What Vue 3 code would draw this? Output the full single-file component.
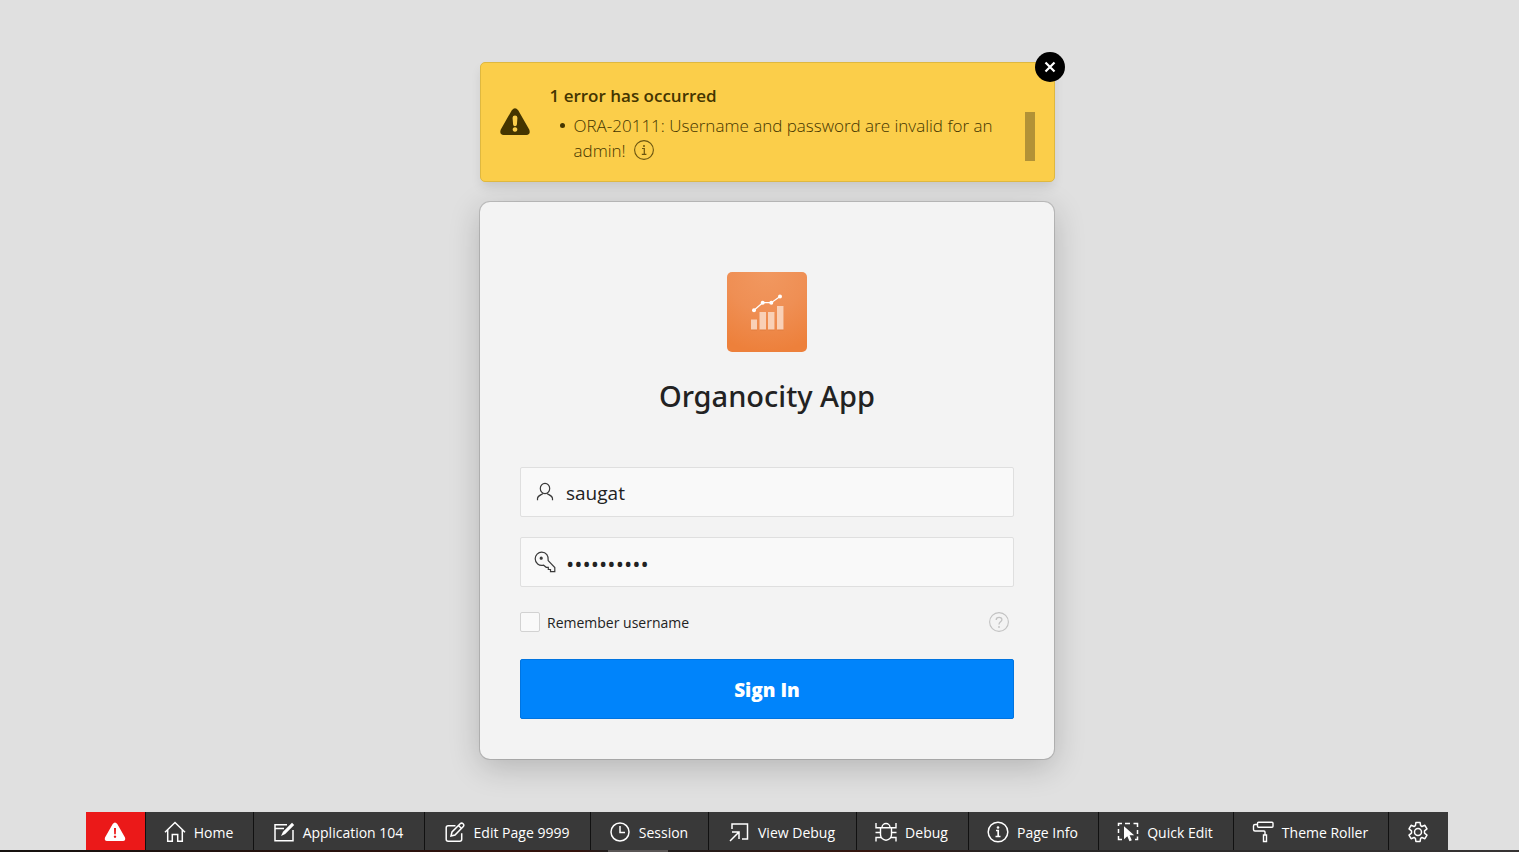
<script setup>
import { ref } from 'vue'

const username = ref('saugat')
const password = ref('organocity')
const remember = ref(false)

const tools = [
  { id: 'home', label: 'Home' },
  { id: 'application', label: 'Application 104' },
  { id: 'edit', label: 'Edit Page 9999' },
  { id: 'session', label: 'Session' },
  { id: 'view', label: 'View Debug' },
  { id: 'debug', label: 'Debug' },
  { id: 'info', label: 'Page Info' },
  { id: 'quick', label: 'Quick Edit' },
  { id: 'theme', label: 'Theme Roller' }
]
</script>

<template>
  <div class="page">
    <main class="content">
      <section class="alert" role="alert">
        <svg class="alert-icon" viewBox="0 0 32 28" aria-hidden="true">
          <path fill="#443500" fill-rule="evenodd" d="M12.8 2.2Q16-1.8 19.2 2.2L30.2 21.6Q32 26.6 27.4 27H4.6Q0 26.6 1.8 21.6ZM16 7.6q-2.6 0-2.4 2.6l.5 6.4q.2 1.6 1.9 1.6t1.9-1.6l.5-6.4q.2-2.6-2.4-2.6ZM16 19.2a2.3 2.3 0 1 0 .01 0Z" />
        </svg>
        <div class="alert-body">
          <h2>1 error has occurred</h2>
          <ul>
            <li>
              ORA-20111: Username and password are invalid for an admin!
              <svg class="info" viewBox="0 0 20 20" fill="none" stroke="#6b5510" aria-hidden="true">
                <circle cx="10" cy="10" r="9.4" stroke-width="1.1" />
                <path d="M8 8.5h2.3v5.500M7.800 14.300h4.600" stroke-width="1.200" />
                <circle cx="10" cy="5.900" r="1" fill="#6b5510" stroke="none" />
              </svg>
            </li>
          </ul>
        </div>
        <span class="thumb"></span>
        <button class="close" type="button" aria-label="Close">
          <svg viewBox="0 0 12 12"><path d="M1.500 1.500l9 9M10.500 1.500l-9 9" stroke="#fff" stroke-width="2.200" /></svg>
        </button>
      </section>

      <form class="card" @submit.prevent>
        <svg class="logo" viewBox="0 0 80 80" aria-hidden="true">
          <defs>
            <radialGradient id="logo-fill" cx=".5" cy="0" r="1">
              <stop offset="0" stop-color="#f19860" />
              <stop offset=".5" stop-color="#ef8f54" />
              <stop offset="1" stop-color="#ed803b" />
            </radialGradient>
          </defs>
          <rect width="80" height="80" rx="5" fill="url(#logo-fill)" />
          <path d="M24 48h6v10.500h-6zM33 40.500h6v18h-6zM41.500 40.500h6v18h-6zM50.500 34.500h6v24h-6z" fill="#c9662b" opacity=".35" />
          <path d="M24 47.500h6V57.500h-6zM32.500 40h6.500v17.500h-6.500zM41 40h6.500v17.500H41zM50 34h6.500v23.500H50z" fill="#f9d0b6" />
          <g fill="#fff">
            <path d="M27 38.200 35.700 30.700H44.300L53 24.500" fill="none" stroke="#fff" stroke-width="1.200" />
            <circle cx="27" cy="38.200" r="2" /><circle cx="35.700" cy="30.700" r="2" />
            <circle cx="44.300" cy="30.700" r="2" /><circle cx="53" cy="24.500" r="2" />
          </g>
        </svg>
        <h1>Organocity App</h1>

        <label class="field">
          <svg viewBox="0 0 22 22" fill="none" stroke="#3a3a3a" stroke-width="1.200" aria-hidden="true">
            <ellipse cx="11" cy="7.500" rx="4.700" ry="5.200" />
            <path d="M3.500 19.200V17.500C3.500 14.800 6.500 14.200 9.200 12.500M18.500 19.200V17.500C18.500 14.800 15.500 14.200 12.800 12.500" />
          </svg>
          <input v-model="username" type="text" aria-label="Username" autocomplete="off" />
        </label>
        <label class="field">
          <svg viewBox="0 0 22 22" fill="none" stroke="#3a3a3a" stroke-width="1.200" aria-hidden="true">
            <path d="M14.200 9.600 20.800 16.500V20.700H16.500V18.500H14.300V16.300H12.200L9.600 14.200C5 15.400 1.200 12 1.200 7.700A6.500 6.500 0 0 1 7.700 1.200C12.200 1.200 14.800 5 14.200 9.600Z" />
            <circle cx="7.200" cy="7.200" r="1" fill="#3a3a3a" />
          </svg>
          <input v-model="password" class="secret" type="password" aria-label="Password" autocomplete="off" />
        </label>

        <div class="options">
          <label class="remember">
            <input v-model="remember" type="checkbox" />
            Remember username
          </label>
          <button class="help" type="button" aria-label="Help">
            <svg viewBox="0 0 20 20" fill="none" stroke="#c2c2c2">
              <circle cx="10" cy="10" r="9.400" stroke-width="1.100" />
              <path d="M7.200 7.900C7.200 4.500 12.900 4.400 12.900 7.700 12.900 9.800 10 9.900 10 12.500" stroke-width="1.300" />
              <circle cx="10" cy="15" r=".9" fill="#c2c2c2" stroke="none" />
            </svg>
          </button>
        </div>
        <button class="submit" type="submit">Sign In</button>
      </form>
    </main>

    <footer class="toolbar" role="toolbar" aria-label="Developer toolbar">
      <button class="tool danger" type="button" aria-label="Errors">
        <svg viewBox="0 0 22 20">
          <path fill="#fff" fill-rule="evenodd" d="M8.700 2Q11-1 13.300 2L21 15.500Q22 18.800 19 19H3Q0 18.800 1 15.500ZM10 6l.2 6.200h1.600L12 6ZM11 13.500a1.200 1.200 0 1 0 .01 0Z" />
        </svg>
      </button>
      <button v-for="tool in tools" :key="tool.id" class="tool" type="button">
        <svg viewBox="0 0 22 22" fill="none" stroke="#fff" stroke-width="1.500" aria-hidden="true">
          <path v-if="tool.id === 'home'" d="M1 11.200 11 1.500l10 9.700M3.700 9v11.300h4.600v-6.800h5.400v6.800h4.600V9" />
          <g v-else-if="tool.id === 'application'">
            <path d="M14 3.800H2v15.900h18V9M2 7.500h9" />
            <path d="m8 15 2-4.200L19 1.800l2.200 2.200-9 9Z" fill="#fff" stroke="none" />
          </g>
          <g v-else-if="tool.id === 'edit'">
            <path d="M11.500 4.800H4.200a2 2 0 0 0-2 2v11.500a2 2 0 0 0 2 2h11.500a2 2 0 0 0 2-2v-6" />
            <path d="m7 15 1-4 8.200-8.200q1.400-1.400 2.900 0t0 2.900L11 14ZM14.500 4.500l3 3" />
          </g>
          <path v-else-if="tool.id === 'session'" d="M20 11a9 9 0 1 1-18 0 9 9 0 1 1 18 0ZM11 5v6.500h5" />
          <path v-else-if="tool.id === 'view'" d="M4 8V3h15.500v15H14M2 20l9-9M4 11h7v7" />
          <g v-else-if="tool.id === 'debug'" stroke-width="1.400">
            <path d="M5.500 6.700h11v7a5.500 5.500 0 0 1-11 0ZM7 6.500a4 4 0 0 1 8 0" />
            <path d="M1 2v4.700h4.500M21 2v4.700h-4.500M.5 11.500h5M21.500 11.500h-5M1 20.500v-4h5M21 20.500v-4h-5" />
          </g>
          <g v-else-if="tool.id === 'info'">
            <circle cx="11" cy="11" r="9.800" stroke-width="1.500" />
            <path d="M9 9.500h2.200v5.800M8.500 15.500h5" stroke-width="1.700" />
            <circle cx="11" cy="6.500" r="1.300" fill="#fff" stroke="none" />
          </g>
          <g v-else-if="tool.id === 'quick'">
            <path d="M1.500 5V2.500H5M8 2.500h5M16.500 2.500h4V6M20.500 9v4M20.500 15.500v3H18M1.500 8v4M1.500 15v3.500H5" />
            <path d="M7 5.200v13l3.300-3 2.200 5 2.300-1-2.200-5h4.600Z" fill="#fff" stroke="none" />
          </g>
          <g v-else stroke-width="1.400">
            <rect x="5.500" y="1.300" width="15.500" height="5" rx="1" />
            <path d="M5.500 3.500H3a1.500 1.500 0 0 0-1.500 1.500v3.500A1.500 1.500 0 0 0 3 10h9a1 1 0 0 1 1 1v3" />
            <path d="M11.500 14h3v6.500h-3z" />
          </g>
        </svg>
        <span>{{ tool.label }}</span>
      </button>
      <button class="tool" type="button" aria-label="Settings">
        <svg viewBox="0 0 22 22" fill="none" stroke="#fff" stroke-width="1.500" stroke-linejoin="round">
          <path d="M8.900 1.500h4.200l.5 3.200 1.300.8 3-1.200 2.100 3.600-2.500 2v2.200l2.500 2-2.100 3.600-3-1.200-1.300.8-.5 3.200H8.900l-.5-3.200-1.300-.8-3 1.200L2 14.100l2.500-2V9.900L2 7.900l2.100-3.600 3 1.200 1.300-.8Z" />
          <circle cx="11" cy="11" r="3.500" />
        </svg>
      </button>
    </footer>
    <div class="strip"></div>
  </div>
</template>

<style>
body {
  background: #e0e0e0;
}
</style>

<style scoped>
.page {
  display: flex;
  flex-direction: column;
  min-height: 100vh;
  background: #e0e0e0;
  color: #222;
  font-family: "Segoe UI", "Open Sans", "Noto Sans", sans-serif;
}

.page * {
  box-sizing: border-box;
}

button,
input {
  margin: 0;
  padding: 0;
  border: 0;
  font-family: inherit;
}

.content {
  display: flex;
  flex-direction: column;
  align-items: center;
  gap: 20px;
  padding: 62px 0 24px 15px;
}

.alert {
  position: relative;
  display: flex;
  align-items: center;
  width: 100%;
  max-width: 575px;
  min-height: 120px;
  padding: 0 19px 0 18px;
  border: 1px solid #dfb83f;
  border-radius: 5px;
  background: #fbce4a;
  box-shadow: 0 6px 12px -2px rgba(0, 0, 0, 0.12);
  color: #443500;
}

.alert-icon {
  flex: none;
  width: 32px;
  height: 28px;
}

.alert-body {
  flex: 1;
  padding: 2px 0 0 19px;
}

.alert h2 {
  margin: 0 0 4px;
  font-size: 17px;
  font-weight: 600;
  line-height: 26px;
}

.alert ul {
  margin: 0;
  padding-left: 24px;
  font-size: 17px;
  font-weight: 300;
  line-height: 25px;
  list-style: none;
}

.alert li::before {
  content: "";
  float: left;
  width: 5px;
  height: 5px;
  margin: 10px 0 0 -14px;
  border-radius: 50%;
  background: #443500;
}

.info {
  width: 20px;
  height: 20px;
  margin-left: 4px;
  vertical-align: -3px;
}

.thumb {
  flex: none;
  align-self: flex-end;
  width: 10px;
  height: 49px;
  margin-bottom: 20px;
  background: #b29236;
}

.close {
  position: absolute;
  top: -11px;
  right: -11px;
  display: grid;
  place-items: center;
  width: 30px;
  height: 30px;
  border-radius: 50%;
  background: #000;
}

.close svg {
  width: 12px;
  height: 12px;
}

.card {
  display: flex;
  flex-direction: column;
  width: 100%;
  max-width: 574px;
  padding: 70px 40px 40px;
  border-radius: 10px;
  background: #f3f3f3;
  box-shadow: 0 0 0 1px rgba(0, 0, 0, 0.14), 0 8px 32px rgba(0, 0, 0, 0.2);
}

.logo {
  align-self: center;
  width: 80px;
  height: 80px;
}

h1 {
  margin: 24px 0 51px;
  font-family: "Segoe UI", "Noto Sans", "Open Sans", sans-serif;
  font-size: 29px;
  font-weight: 500;
  line-height: 40px;
  text-align: center;
}

.field {
  display: flex;
  align-items: center;
  gap: 10px;
  height: 50px;
  margin-bottom: 20px;
  padding: 0 14px 0 13px;
  border: 1px solid #dfdfdf;
  border-radius: 2px;
  background: #f9f9f9;
}

.field svg {
  flex: none;
  width: 22px;
  height: 22px;
}

.field input {
  flex: 1;
  min-width: 0;
  height: 48px;
  padding-top: 2px;
  outline: none;
  background: transparent;
  color: #222;
  font-size: 19px;
}

.field .secret {
  font-size: 22px;
}

.options {
  display: flex;
  align-items: center;
  justify-content: space-between;
  height: 20px;
  margin: 5px 0 27px;
  padding-right: 5px;
}

.remember {
  display: flex;
  align-items: center;
  gap: 7px;
  font-size: 14px;
}

.remember input {
  appearance: none;
  width: 20px;
  height: 20px;
  border: 1px solid #d2d2d2;
  border-radius: 2px;
  background: #f9f9f9;
}

.help {
  width: 20px;
  height: 20px;
  background: none;
}

.help svg {
  display: block;
}

.submit {
  height: 60px;
  padding-top: 2px;
  border: 1px solid #0074e0;
  border-radius: 2px;
  background: #0084fb;
  color: #fff;
  font-size: 19px;
  font-weight: 800;
}

.toolbar {
  display: grid;
  grid-template-columns: 60px 108px 171px 166px 118px 148px 112px 130px 135px 155px 59px;
  justify-content: center;
  margin-top: auto;
  padding-left: 15px;
}

.tool {
  display: flex;
  align-items: center;
  justify-content: center;
  gap: 8px;
  height: 38px;
  padding: 2px 2px 0 0;
  border-right: 1px solid #111;
  background: #393939;
  color: #fff;
  font-size: 14px;
  white-space: nowrap;
}

.tool:last-child {
  border-right: 0;
}

.tool svg {
  flex: none;
  width: 22px;
  height: 22px;
}

.danger {
  background: #eb1919;
}

.strip {
  height: 2px;
  background: linear-gradient(90deg, #15110f 0, #34120c 38%, #221f1e 40%, #5a5655 40%, #5a5655 44%, #211c1b 44%, #35150e 57%, #262424 66%, #363333 100%);
}
</style>
